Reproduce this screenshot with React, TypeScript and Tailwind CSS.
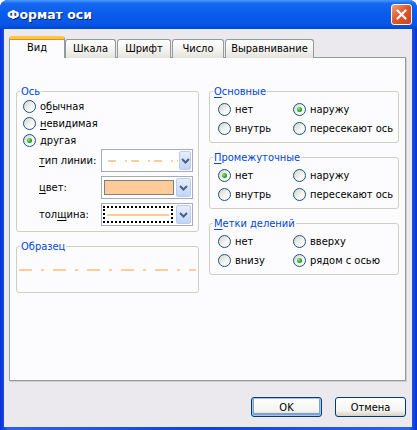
import React from 'react'

const font = "font-['Tahoma','DejaVu_Sans_Condensed','Liberation_Sans',sans-serif]"

function U({ children }: { children: React.ReactNode }) {
  return <span className="underline underline-offset-[2px]">{children}</span>
}

function Radio({ checked, children }: { checked?: boolean; children: React.ReactNode }) {
  return (
    <div className="flex items-center gap-[4px]">
      <span className="flex h-[13px] w-[13px] shrink-0 items-center justify-center rounded-full border border-[#1c5180] bg-[linear-gradient(135deg,#d4d3cb,#f6f6f3_60%,#ffffff)]">
        {checked && <span className="h-[5px] w-[5px] rounded-full bg-[radial-gradient(circle_at_35%_35%,#8ee68e,#21a121_60%,#1a8a1a)]" />}
      </span>
      <span className="whitespace-nowrap">{children}</span>
    </div>
  )
}

function Group({ title, className = '', children }: { title: React.ReactNode; className?: string; children: React.ReactNode }) {
  return (
    <fieldset className={`rounded-[3px] border border-[#d0d0bf] ${className}`}>
      <legend className="ml-[3px] px-[1px] text-[#0046d5]">{title}</legend>
      {children}
    </fieldset>
  )
}

function Chevron() {
  return (
    <svg width="9" height="6" viewBox="0 0 9 6">
      <path d="M1 1 L4.5 4.5 L8 1" fill="none" stroke="#4d6185" strokeWidth="2" />
    </svg>
  )
}

function Combo({ children }: { children: React.ReactNode }) {
  return (
    <div className="flex h-[23px] w-[92px] border border-[#a5acb5] bg-white">
      <div className="flex flex-1 items-center">{children}</div>
      <div className="m-[1px] flex w-[15px] items-center justify-center rounded-[2px] border border-[#b9cdf3] bg-[linear-gradient(#e6eefc,#c3d5f8)]">
        <Chevron />
      </div>
    </div>
  )
}

function TwoCol({ rows }: { rows: [React.ReactNode, boolean, React.ReactNode, boolean][] }) {
  return (
    <div className="pb-[4px] pl-[8px] pt-[2px]">
      {rows.map(([a, ca, b, cb], i) => (
        <div key={i} className="flex h-[19px] items-center">
          <div className="w-[75px]">
            <Radio checked={ca}>{a}</Radio>
          </div>
          <Radio checked={cb}>{b}</Radio>
        </div>
      ))}
    </div>
  )
}

export default function App() {
  const tabs = [
    { label: 'Шкала', w: 'w-[51px]' },
    { label: 'Шрифт', w: 'w-[54px] ml-[1px]' },
    { label: 'Число', w: 'w-[52px] ml-[1px]' },
    { label: 'Выравнивание', w: 'w-[89px] ml-[1px]' },
  ]

  return (
    <div className={`h-[430px] w-[417px] bg-white text-[11px] leading-[13px] text-black ${font}`}>
      <div className="flex h-full flex-col overflow-hidden rounded-t-[8px] bg-[linear-gradient(90deg,#0831d9,#2a64ea_2%,#0b45dc_50%,#2a64ea_98%,#0831d9)]">
        {/* title bar */}
        <div className="flex h-[29px] shrink-0 items-center justify-between bg-[linear-gradient(#4a9aff,#1668f0_12%,#0a5ced_45%,#0656e6_85%,#0047d0)] pl-[7px] pr-[5px]">
          <span className="font-['DejaVu_Sans','Liberation_Sans',sans-serif] text-[12.5px] font-bold text-white [text-shadow:1px_1px_#0a1e6e]">
            Формат оси
          </span>
          <div className="flex h-[21px] w-[21px] items-center justify-center rounded-[3px] border border-white bg-[linear-gradient(135deg,#f2a47f,#e2582e_45%,#cc431d)]">
            <svg width="11" height="11" viewBox="0 0 11 11">
              <path d="M1.5 1.5 L9.5 9.5 M9.5 1.5 L1.5 9.5" stroke="white" strokeWidth="2.2" strokeLinecap="round" />
            </svg>
          </div>
        </div>

        {/* body */}
        <div className="mb-[3px] ml-[4px] mr-[5px] flex flex-1 flex-col bg-[#ece9ee] pb-[10px] pl-[5px] pr-[6px] pt-[7px]">
          {/* tabs */}
          <div className="relative z-10 -mb-[1px] flex items-end">
            <div className="flex h-[22px] w-[56px] items-center justify-center rounded-t-[3px] border-x border-t-[3px] border-x-[#919b9c] border-t-[#ffc83c] bg-[#fcfcfe] pb-[2px] shadow-[inset_0_1px_0_#e68b2c]">
              Вид
            </div>
            {tabs.map(t => (
              <div
                key={t.label}
                className={`flex h-[19px] items-center justify-center rounded-t-[3px] border-x border-t border-[#919b9c] bg-[linear-gradient(#ffffff,#f2f1ed_60%,#e4e2dc)] pb-[1px] ${t.w}`}
              >
                {t.label}
              </div>
            ))}
          </div>

          {/* panel */}
          <div className="flex h-[324px] gap-[10px] border border-[#919b9c] bg-[#fcfcfe] pl-[6px] pr-[6px] pt-[27px] shadow-[1px_1px_0_#d0cfc8]">
            {/* left column */}
            <div className="flex w-[183px] flex-col">
              <Group title="Ось" className="pb-[5px]">
                <div className="pl-[6px]">
                  <div className="flex h-[17px] items-center">
                    <Radio>о<U>б</U>ычная</Radio>
                  </div>
                  <div className="flex h-[17px] items-center">
                    <Radio><U>н</U>евидимая</Radio>
                  </div>
                  <div className="flex h-[17px] items-center">
                    <Radio checked>другая</Radio>
                  </div>
                </div>
                <div className="flex flex-col gap-[4px] pl-[22px]">
                  <div className="flex items-center">
                    <span className="w-[62px]"><U>т</U>ип линии:</span>
                    <Combo>
                      <svg width="70" height="4" className="ml-[6px]">
                        <line x1="0" y1="2" x2="70" y2="2" stroke="#ffcc99" strokeWidth="2" strokeDasharray="8 9 2 4" />
                      </svg>
                    </Combo>
                  </div>
                  <div className="flex items-center">
                    <span className="w-[62px]"><U>ц</U>вет:</span>
                    <Combo>
                      <div className="ml-[2px] h-[15px] w-[70px] border border-[#808080] bg-[#ffcc99]" />
                    </Combo>
                  </div>
                  <div className="flex items-center">
                    <span className="w-[62px]">тол<U>щ</U>ина:</span>
                    <Combo>
                      <div className="ml-[1px] flex h-[17px] w-[70px] items-center justify-center border-2 border-dotted border-black">
                        <div className="h-[2px] w-[62px] bg-[#ffcc99]" />
                      </div>
                    </Combo>
                  </div>
                </div>
              </Group>

              <Group title="Образец" className="mt-[8px]">
                <div className="px-[2px] pb-[21px] pt-[16px]">
                  <svg width="177" height="2" className="block">
                    <line x1="0" y1="1" x2="177" y2="1" stroke="#ffcc99" strokeWidth="2" strokeDasharray="13 9 3 9" />
                  </svg>
                </div>
              </Group>
            </div>

            {/* right column */}
            <div className="flex w-[190px] flex-col">
              <Group title={<><U>О</U>сновные</>}>
                <TwoCol rows={[['нет', false, 'наружу', true], ['внутрь', false, 'пересекают ось', false]]} />
              </Group>
              <Group title={<><U>П</U>ромежуточные</>} className="mt-[8px]">
                <TwoCol rows={[['нет', true, 'наружу', false], ['внутрь', false, 'пересекают ось', false]]} />
              </Group>
              <Group title={<><U>М</U>етки делений</>} className="mt-[8px]">
                <TwoCol rows={[['нет', false, 'вверху', false], ['внизу', false, 'рядом с осью', true]]} />
              </Group>
            </div>
          </div>

          {/* buttons */}
          <div className="mt-auto flex justify-end gap-[13px]">
            <button className="h-[20px] w-[71px] rounded-[3px] border border-[#003c74] bg-[linear-gradient(#ffffff,#f4f4f0_70%,#d6d0c5)] font-normal shadow-[inset_0_0_0_1px_#a5c4f0,inset_0_-1px_0_2px_#7da2ce]">
              OK
            </button>
            <button className="h-[20px] w-[71px] rounded-[3px] border border-[#003c74] bg-[linear-gradient(#ffffff,#f4f4f0_70%,#d6d0c5)] font-normal">
              Отмена
            </button>
          </div>
        </div>
      </div>
    </div>
  )
}
